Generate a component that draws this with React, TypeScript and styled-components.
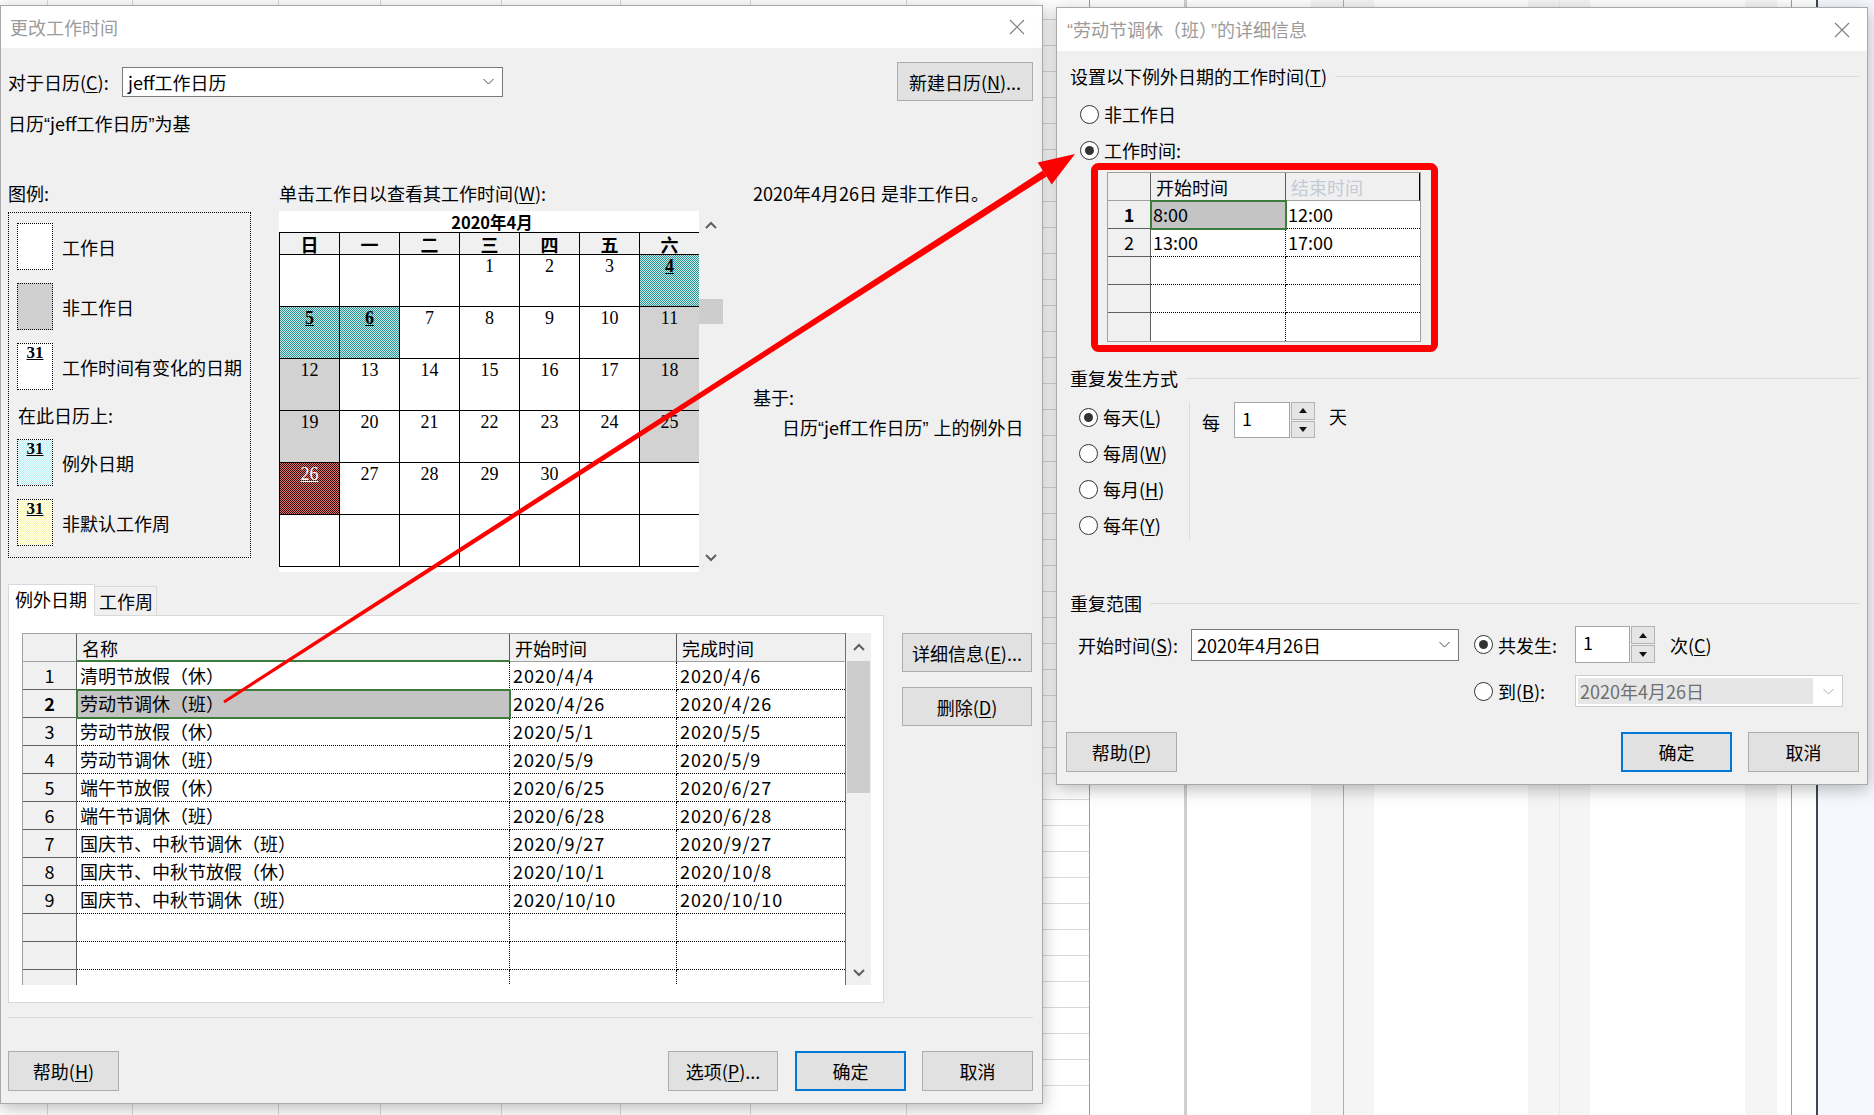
import React from "react";
import styled, { createGlobalStyle, css } from "styled-components";

const FONT = `"Noto Sans CJK SC", "Noto Sans", sans-serif`;
const SERIF = `"Liberation Serif", "DejaVu Serif", serif`;

const GlobalStyle = createGlobalStyle`
  html, body { margin: 0; padding: 0; background: #ffffff; }
  body { font-family: ${FONT}; font-size: 18px; color: #000; }
  *, *::before, *::after { box-sizing: border-box; }
`;

const checker = (a: string, b: string) => css`
  background-color: ${a};
  background-image: repeating-conic-gradient(${a} 0% 25%, ${b} 0% 50%);
  background-size: 2px 2px;
`;

/* ---------- page & backdrop ---------- */
const Page = styled.div`
  position: relative;
  width: 1874px;
  height: 1115px;
  overflow: hidden;
  background: #fff;
`;

const Backdrop = styled.div`
  display: flex;
  height: 100%;
`;

const SheetColumn = styled.div<{ $w: number; $edge?: boolean }>`
  flex: none;
  width: ${(p) => p.$w}px;
  height: 100%;
  border-right: 1px solid ${(p) => (p.$edge ? "#9c9c9c" : "#d8d8d8")};
  background-image: repeating-linear-gradient(
    to bottom,
    transparent 0px,
    transparent 25px,
    #d8d8d8 25px,
    #d8d8d8 26px
  );
  background-position: 0 -6px;
`;

const GanttColumn = styled.div<{ $w?: number; $shade?: boolean; $tint?: boolean; $line?: string; $lineW?: number }>`
  flex: ${(p) => (p.$w ? "none" : "1")};
  width: ${(p) => (p.$w ? `${p.$w}px` : "auto")};
  height: 100%;
  background: ${(p) => (p.$tint ? "#f6f8fd" : p.$shade ? "#f5f5f5" : "#ffffff")};
  border-right: ${(p) => (p.$line ? `${p.$lineW ?? 1}px solid ${p.$line}` : "none")};
`;

/* ---------- windows ---------- */
const Window = styled.section<{ $x: number; $y: number; $w: number; $h: number }>`
  position: absolute;
  left: ${(p) => p.$x}px;
  top: ${(p) => p.$y}px;
  width: ${(p) => p.$w}px;
  height: ${(p) => p.$h}px;
  display: flex;
  flex-direction: column;
  background: #f0f0f0;
  border: 1px solid #a9a9a9;
  box-shadow: 0 4px 16px rgba(0, 0, 0, 0.28);
  font-family: ${FONT};
  font-size: 18px;
  color: #000;
`;

const TitleBar = styled.header<{ $h: number; $pl: number }>`
  flex: none;
  height: ${(p) => p.$h}px;
  display: flex;
  align-items: center;
  justify-content: space-between;
  padding: 0 17px 0 ${(p) => p.$pl}px;
  background: #fff;
  color: #9b9b9b;
  line-height: 22px;
  white-space: nowrap;
`;

const CloseGlyph = () => (
  <svg width="16" height="16" viewBox="0 0 16 16">
    <path d="M1 1 L15 15 M15 1 L1 15" stroke="#7d7d7d" strokeWidth="1.1" fill="none" />
  </svg>
);

const Quote = styled.span<{ $gap?: number }>`
  font-family: "Liberation Sans", Arial, sans-serif;
  margin-left: ${(p) => p.$gap ?? 0}px;
`;

const MainBody = styled.div`
  flex: 1;
  display: flex;
  flex-direction: column;
  padding: 0 9px 0 7px;
`;

const DetailBody = styled.div`
  flex: 1;
  display: flex;
  flex-direction: column;
  padding: 0 8px 0 13px;
`;

const Row = styled.div<{ $mt?: number; $h?: number; $pl?: number }>`
  display: flex;
  align-items: center;
  margin-top: ${(p) => p.$mt ?? 0}px;
  padding-left: ${(p) => p.$pl ?? 0}px;
  ${(p) => (p.$h ? `height: ${p.$h}px;` : "")}
`;

const TextLine = styled.div<{ $mt?: number; $indent?: number }>`
  height: 22px;
  line-height: 22px;
  white-space: nowrap;
  margin-top: ${(p) => p.$mt ?? 0}px;
  padding-left: ${(p) => p.$indent ?? 0}px;
`;

const U = styled.span`
  text-decoration: underline;
  text-underline-offset: 2px;
`;

const Grow = styled.div`
  flex: 1;
`;

const FieldLabel = styled.span<{ $w: number; $pl?: number }>`
  flex: none;
  width: ${(p) => p.$w}px;
  padding-left: ${(p) => p.$pl ?? 0}px;
  line-height: 22px;
  white-space: nowrap;
`;

const SelectBox = styled.div<{ $w: number; $h: number; $disabled?: boolean }>`
  flex: none;
  width: ${(p) => p.$w}px;
  height: ${(p) => p.$h}px;
  display: flex;
  align-items: center;
  background: #fff;
  border: 1px solid ${(p) => (p.$disabled ? "#cdcdcd" : "#7a7a7a")};
  padding: 0 8px 0 ${(p) => (p.$disabled ? 2 : 5)}px;
`;

const SelectValue = styled.span<{ $disabled?: boolean }>`
  flex: 1;
  line-height: 22px;
  white-space: nowrap;
  ${(p) =>
    p.$disabled &&
    css`
      align-self: stretch;
      display: flex;
      align-items: center;
      margin: 2px 10px 2px 0;
      padding-left: 2px;
      background: #e6e6e6;
      color: #6f6f6f;
    `}
`;

const DropChevron = ({ light }: { light?: boolean }) => (
  <svg width="11" height="7" viewBox="0 0 11 7">
    <polyline points="0.5,1 5.5,6 10.5,1" fill="none" stroke={light ? "#a8a8a8" : "#4a4a4a"} strokeWidth="1" />
  </svg>
);

const PushButton = styled.div<{ $w: number; $h?: number; $primary?: boolean; $ml?: number }>`
  flex: none;
  width: ${(p) => p.$w}px;
  height: ${(p) => p.$h ?? 40}px;
  margin-left: ${(p) => p.$ml ?? 0}px;
  display: flex;
  align-items: center;
  justify-content: center;
  background: #e1e1e1;
  border: ${(p) => (p.$primary ? "2px solid #0078d7" : "1px solid #adadad")};
  line-height: 22px;
  white-space: nowrap;
`;

/* ---------- scrollbars ---------- */
const VScroll = styled.div<{ $w: number; $edge?: boolean }>`
  flex: none;
  width: ${(p) => p.$w}px;
  display: flex;
  flex-direction: column;
  background: #f0f0f0;
  border-left: ${(p) => (p.$edge ? "1px solid #6e6e6e" : "none")};
`;

const ScrollArrow = styled.div<{ $h: number }>`
  flex: none;
  height: ${(p) => p.$h}px;
  display: flex;
  align-items: center;
  justify-content: center;
`;

const ScrollTrack = styled.div`
  flex: 1;
  display: flex;
  flex-direction: column;
`;

const ScrollThumb = styled.div<{ $mt: number; $h: number; $inset?: number }>`
  margin: ${(p) => p.$mt}px ${(p) => p.$inset ?? 0}px 0;
  height: ${(p) => p.$h}px;
  background: #cdcdcd;
`;

const ArrowGlyph = ({ up }: { up?: boolean }) => (
  <svg width="12" height="8" viewBox="0 0 12 8">
    <polyline
      points={up ? "1,7 6,2 11,7" : "1,1 6,6 11,1"}
      fill="none"
      stroke="#5f5f5f"
      strokeWidth="2"
    />
  </svg>
);

/* ---------- legend ---------- */
const Columns = styled.div<{ $mt: number }>`
  display: flex;
  align-items: flex-start;
  margin-top: ${(p) => p.$mt}px;
`;

const LegendCol = styled.div`
  flex: none;
  width: 243px;
  display: flex;
  flex-direction: column;
`;

const LegendBox = styled.div`
  margin-top: 8px;
  height: 346px;
  border: 1px dotted #000;
  padding: 10px 0 0 8px;
  display: flex;
  flex-direction: column;
  gap: 13px;
`;

const LegendItem = styled.div`
  display: flex;
  align-items: center;
  gap: 9px;
  line-height: 22px;
  white-space: nowrap;
`;

type SwatchKind = "work" | "off" | "changed" | "exception" | "week";

const Swatch = styled.div<{ $kind: SwatchKind }>`
  flex: none;
  width: 36px;
  height: 47px;
  border: 1px dotted #000;
  text-align: center;
  font-family: ${SERIF};
  font-weight: 700;
  font-size: 17px;
  line-height: 18px;
  text-decoration: underline;
  ${(p) => p.$kind === "work" && css`background: #fff;`}
  ${(p) => p.$kind === "changed" && css`background: #fff;`}
  ${(p) => p.$kind === "off" && css`background: #d0d0d0;`}
  ${(p) => p.$kind === "exception" && checker("#b6eef3", "#f2ffff")}
  ${(p) => p.$kind === "week" && checker("#fbf6b0", "#fffff0")}
`;

const LegendSub = styled.div`
  line-height: 22px;
  margin-top: 1px;
  padding-left: 1px;
`;

/* ---------- calendar ---------- */
const CalendarCol = styled.div`
  flex: none;
  width: 444px;
  margin-left: 28px;
  display: flex;
  flex-direction: column;
`;

const CalendarFrame = styled.div`
  margin-top: 7px;
  height: 361px;
  display: flex;
`;

const MonthView = styled.div`
  flex: none;
  width: 420px;
  background: #fff;
  display: flex;
  flex-direction: column;
  overflow: hidden;
  padding-bottom: 5px;
`;

const MonthTitle = styled.div`
  height: 21px;
  line-height: 22px;
  text-align: center;
  font-weight: 700;
  font-size: 16.5px;
  padding-left: 6px;
`;

const DayGrid = styled.div`
  display: grid;
  grid-template-columns: repeat(7, 60px);
  grid-template-rows: 22px repeat(6, 52px);
  border-bottom: 1px solid #000;
`;

const DayHead = styled.div`
  border-top: 1px solid #000;
  border-left: 1px solid #000;
  background: #f0f0f0;
  text-align: center;
  font-weight: 700;
  font-size: 18px;
  line-height: 22px;
`;

type Tone = "work" | "off" | "teal" | "red";

const DayCell = styled.div<{ $tone: Tone; $mark?: boolean }>`
  border-top: 1px solid #000;
  border-left: 1px solid #000;
  font-family: ${SERIF};
  font-size: 18px;
  line-height: 20px;
  padding-top: 1px;
  text-align: center;
  color: ${(p) => (p.$tone === "red" ? "#fff" : "#000")};
  font-weight: ${(p) => (p.$mark ? 700 : 400)};
  text-decoration: ${(p) => (p.$mark || p.$tone === "red" ? "underline" : "none")};
  background: #fff;
  ${(p) => p.$tone === "off" && css`background: #d2d2d2;`}
  ${(p) => p.$tone === "teal" && checker("#2f9696", "#c6e6e6")}
  ${(p) => p.$tone === "red" && checker("#2e0b0b", "#e87070")}
`;

const InfoCol = styled.div`
  flex: 1;
  margin-left: 30px;
  display: flex;
  flex-direction: column;
`;

/* ---------- tabs & tables ---------- */
const LowerRow = styled.div<{ $mt: number }>`
  display: flex;
  margin-top: ${(p) => p.$mt}px;
`;

const TabArea = styled.div`
  flex: none;
  width: 876px;
  display: flex;
  flex-direction: column;
`;

const TabStrip = styled.div`
  display: flex;
  align-items: flex-end;
  height: 31px;
`;

const Tab = styled.div<{ $active?: boolean; $w: number }>`
  flex: none;
  width: ${(p) => p.$w}px;
  height: ${(p) => (p.$active ? 32 : 29)}px;
  margin-bottom: ${(p) => (p.$active ? -1 : 0)}px;
  position: relative;
  z-index: ${(p) => (p.$active ? 1 : 0)};
  padding-left: ${(p) => (p.$active ? 6 : 4)}px;
  line-height: 29px;
  background: ${(p) => (p.$active ? "#fff" : "#f0f0f0")};
  border: 1px solid #d9d9d9;
  border-bottom: none;
  ${(p) => !p.$active && css`border-left: none;`}
  white-space: nowrap;
`;

const TabPanel = styled.div`
  height: 388px;
  background: #fff;
  border: 1px solid #d9d9d9;
  padding: 17px 0 0 13px;
`;

const TableFrame = styled.div<{ $h: number }>`
  display: flex;
  height: ${(p) => p.$h}px;
`;

const GridTable = styled.div<{ $cols: string; $w: number; $boxed?: boolean }>`
  flex: none;
  width: ${(p) => p.$w}px;
  display: grid;
  grid-template-columns: ${(p) => p.$cols};
  grid-auto-rows: 28px;
  align-content: start;
  overflow: hidden;
  background: #fff;
  border-top: 1px solid #a0a0a0;
  border-left: 1px solid #a0a0a0;
  ${(p) =>
    p.$boxed &&
    css`
      border-right: 1px solid #a0a0a0;
      border-bottom: 1px solid #a0a0a0;
    `}
`;

const HeadCell = styled.div<{ $focus?: boolean; $dim?: boolean; $edge?: string; $pl?: number }>`
  background: #f0f0f0;
  border-bottom: ${(p) => (p.$focus ? "2px solid #3c7d3c" : "1px solid #a0a0a0")};
  border-right: 1px solid ${(p) => p.$edge ?? "#5a5a5a"};
  padding: 2px 0 0 ${(p) => p.$pl ?? 5}px;
  line-height: 25px;
  color: ${(p) => (p.$dim ? "#c3cbd6" : "#000")};
  white-space: nowrap;
  overflow: hidden;
`;

const RowHead = styled.div<{ $bold?: boolean; $lastRow?: boolean }>`
  background: #f0f0f0;
  border-bottom: ${(p) => (p.$lastRow ? "none" : "1px solid #5f5f5f")};
  border-right: 1px solid #5f5f5f;
  text-align: center;
  line-height: 27px;
  font-weight: ${(p) => (p.$bold ? 700 : 400)};
`;

const DataCell = styled.div<{ $selected?: boolean; $last?: boolean; $lastRow?: boolean; $pl?: number; $wide?: boolean }>`
  border-bottom: ${(p) => (p.$lastRow ? "none" : "1px dotted #000")};
  border-right: ${(p) => (p.$last ? "none" : "1px dotted #000")};
  padding-left: ${(p) => p.$pl ?? 3}px;
  line-height: 27px;
  letter-spacing: ${(p) => (p.$wide ? "0.9px" : "normal")};
  white-space: nowrap;
  overflow: hidden;
  ${(p) =>
    p.$selected &&
    css`
      background: #c4c4c4;
      outline: 2px solid #3c7d3c;
      outline-offset: -1px;
      position: relative;
      z-index: 1;
    `}
`;

const SideButtons = styled.div`
  margin-left: 18px;
  padding-top: 49px;
  display: flex;
  flex-direction: column;
  gap: 15px;
`;

const Separator = styled.div<{ $mt: number }>`
  margin-top: ${(p) => p.$mt}px;
  height: 1px;
  background: #dadada;
`;

const ButtonRow = styled.div<{ $mt: number; $gap?: number }>`
  display: flex;
  align-items: center;
  margin-top: ${(p) => p.$mt}px;
  gap: ${(p) => p.$gap ?? 16}px;
`;

/* ---------- detail dialog parts ---------- */
const GroupHeader = styled.div<{ $mt: number }>`
  display: flex;
  align-items: center;
  height: 22px;
  line-height: 22px;
  margin-top: ${(p) => p.$mt}px;
  white-space: nowrap;
  &::after {
    content: "";
    flex: 1;
    height: 1px;
    margin-left: 8px;
    background: #dcdcdc;
  }
`;

const RadioRow = styled.div<{ $mt?: number; $indent?: number }>`
  display: flex;
  align-items: center;
  height: 22px;
  margin-top: ${(p) => p.$mt ?? 0}px;
  padding-left: ${(p) => p.$indent ?? 0}px;
  white-space: nowrap;
`;

const RadioCircle = styled.span`
  flex: none;
  width: 19px;
  height: 19px;
  border-radius: 50%;
  border: 1px solid #333;
  background: #fff;
  margin-right: 5px;
  display: flex;
  align-items: center;
  justify-content: center;
`;

const RadioDot = styled.span`
  width: 9px;
  height: 9px;
  border-radius: 50%;
  background: #333;
`;

const Radio = ({ on }: { on?: boolean }) => <RadioCircle>{on && <RadioDot />}</RadioCircle>;

const GridWrap = styled.div<{ $mt: number; $indent: number }>`
  margin-top: ${(p) => p.$mt}px;
  padding-left: ${(p) => p.$indent}px;
`;

const RecurBlock = styled.div<{ $mt: number }>`
  display: flex;
  height: 138px;
  margin-top: ${(p) => p.$mt}px;
`;

const RecurOptions = styled.div`
  flex: none;
  width: 120px;
  border-right: 1px solid #dcdcdc;
  padding-top: 4px;
  display: flex;
  flex-direction: column;
  gap: 14px;
`;

const EveryGroup = styled.div`
  display: flex;
  align-items: flex-start;
  margin-left: 12px;
`;

const Word = styled.span<{ $mt?: number; $ml?: number; $w?: number }>`
  flex: none;
  line-height: 22px;
  margin-top: ${(p) => p.$mt ?? 0}px;
  margin-left: ${(p) => p.$ml ?? 0}px;
  ${(p) => (p.$w ? `width: ${p.$w}px;` : "")}
  white-space: nowrap;
`;

const Spin = styled.div<{ $h: number; $ml?: number }>`
  flex: none;
  display: flex;
  height: ${(p) => p.$h}px;
  margin-left: ${(p) => p.$ml ?? 0}px;
`;

const SpinField = styled.div<{ $w: number }>`
  width: ${(p) => p.$w}px;
  border: 1px solid #a6a6a6;
  background: #fff;
  padding: 4px 0 0 7px;
  line-height: 22px;
`;

const SpinButtons = styled.div`
  width: 24px;
  display: flex;
  flex-direction: column;
  gap: 1px;
  margin-left: 1px;
`;

const SpinBtn = styled.div`
  flex: 1;
  background: #e5e5e5;
  border: 1px solid #b4b4b4;
  display: flex;
  align-items: center;
  justify-content: center;
`;

const Tri = ({ up }: { up?: boolean }) => (
  <svg width="8" height="5" viewBox="0 0 8 5">
    <polygon points={up ? "0,5 4,0 8,5" : "0,0 8,0 4,5"} fill="#111" />
  </svg>
);

const Overlay = styled.svg`
  position: absolute;
  left: 0;
  top: 0;
  pointer-events: none;
  z-index: 10;
`;

/* ---------- data ---------- */
const weekHeads = ["日", "一", "二", "三", "四", "五", "六"];

type Day = { n?: number; tone: Tone; mark?: boolean };
const days: Day[] = [
  { tone: "work" }, { tone: "work" }, { tone: "work" },
  { n: 1, tone: "work" }, { n: 2, tone: "work" }, { n: 3, tone: "work" }, { n: 4, tone: "teal", mark: true },
  { n: 5, tone: "teal", mark: true }, { n: 6, tone: "teal", mark: true }, { n: 7, tone: "work" }, { n: 8, tone: "work" },
  { n: 9, tone: "work" }, { n: 10, tone: "work" }, { n: 11, tone: "off" },
  { n: 12, tone: "off" }, { n: 13, tone: "work" }, { n: 14, tone: "work" }, { n: 15, tone: "work" },
  { n: 16, tone: "work" }, { n: 17, tone: "work" }, { n: 18, tone: "off" },
  { n: 19, tone: "off" }, { n: 20, tone: "work" }, { n: 21, tone: "work" }, { n: 22, tone: "work" },
  { n: 23, tone: "work" }, { n: 24, tone: "work" }, { n: 25, tone: "off" },
  { n: 26, tone: "red" }, { n: 27, tone: "work" }, { n: 28, tone: "work" }, { n: 29, tone: "work" },
  { n: 30, tone: "work" }, { tone: "work" }, { tone: "work" },
  { tone: "work" }, { tone: "work" }, { tone: "work" }, { tone: "work" }, { tone: "work" }, { tone: "work" }, { tone: "work" },
];

const exceptions: [string, string, string][] = [
  ["清明节放假（休）", "2020/4/4", "2020/4/6"],
  ["劳动节调休（班）", "2020/4/26", "2020/4/26"],
  ["劳动节放假（休）", "2020/5/1", "2020/5/5"],
  ["劳动节调休（班）", "2020/5/9", "2020/5/9"],
  ["端午节放假（休）", "2020/6/25", "2020/6/27"],
  ["端午节调休（班）", "2020/6/28", "2020/6/28"],
  ["国庆节、中秋节调休（班）", "2020/9/27", "2020/9/27"],
  ["国庆节、中秋节放假（休）", "2020/10/1", "2020/10/8"],
  ["国庆节、中秋节调休（班）", "2020/10/10", "2020/10/10"],
  ["", "", ""],
  ["", "", ""],
  ["", "", ""],
];

const hours: [string, string][] = [
  ["8:00", "12:00"],
  ["13:00", "17:00"],
  ["", ""],
  ["", ""],
  ["", ""],
];

const sheetWidths = [48, 85, 146, 102, 121, 119, 130, 156, 183];

/* ---------- component ---------- */
export default function App() {
  return (
    <Page>
      <GlobalStyle />
      <Backdrop>
        {sheetWidths.map((w, i) => (
          <SheetColumn key={i} $w={w} $edge={i === sheetWidths.length - 1} />
        ))}
        <GanttColumn $w={97} $line="#cfcfcf" $lineW={3} />
        <GanttColumn $w={124} />
        <GanttColumn $w={33} $shade $line="#8cc68c" />
        <GanttColumn $w={30} $shade />
        <GanttColumn $w={154} />
        <GanttColumn $w={32} $shade $line="#ebebeb" />
        <GanttColumn $w={30} $shade />
        <GanttColumn $w={155} />
        <GanttColumn $w={32} $shade />
        <GanttColumn $w={15} $line="#a0a0a0" />
        <GanttColumn $w={26} $line="#3b4756" $lineW={2} />
        <GanttColumn $tint />
      </Backdrop>

      {/* ---------- 更改工作时间 ---------- */}
      <Window $x={0} $y={5} $w={1043} $h={1099}>
        <TitleBar $h={42} $pl={9}>
          <span>更改工作时间</span>
          <CloseGlyph />
        </TitleBar>
        <MainBody>
          <Row $mt={14} $h={39}>
            <FieldLabel $w={114}>
              对于日历(<U>C</U>):
            </FieldLabel>
            <SelectBox $w={381} $h={30}>
              <SelectValue>jeff工作日历</SelectValue>
              <DropChevron />
            </SelectBox>
            <Grow />
            <PushButton $w={136} $h={39}>
              新建日历(<U>N</U>)...
            </PushButton>
          </Row>
          <TextLine $mt={11}>
            日历<Quote>“</Quote>jeff工作日历<Quote>”</Quote>为基
          </TextLine>

          <Columns $mt={48}>
            <LegendCol>
              <TextLine>图例:</TextLine>
              <LegendBox>
                <LegendItem>
                  <Swatch $kind="work" />
                  工作日
                </LegendItem>
                <LegendItem>
                  <Swatch $kind="off" />
                  非工作日
                </LegendItem>
                <LegendItem>
                  <Swatch $kind="changed">31</Swatch>
                  工作时间有变化的日期
                </LegendItem>
                <LegendSub>在此日历上:</LegendSub>
                <LegendItem>
                  <Swatch $kind="exception">31</Swatch>
                  例外日期
                </LegendItem>
                <LegendItem>
                  <Swatch $kind="week">31</Swatch>
                  非默认工作周
                </LegendItem>
              </LegendBox>
            </LegendCol>

            <CalendarCol>
              <TextLine>
                单击工作日以查看其工作时间(<U>W</U>):
              </TextLine>
              <CalendarFrame>
                <MonthView>
                  <MonthTitle>2020年4月</MonthTitle>
                  <DayGrid>
                    {weekHeads.map((d) => (
                      <DayHead key={d}>{d}</DayHead>
                    ))}
                    {days.map((d, i) => (
                      <DayCell key={i} $tone={d.tone} $mark={d.mark}>
                        {d.n ?? ""}
                      </DayCell>
                    ))}
                  </DayGrid>
                </MonthView>
                <VScroll $w={24}>
                  <ScrollArrow $h={28}>
                    <ArrowGlyph up />
                  </ScrollArrow>
                  <ScrollTrack>
                    <ScrollThumb $mt={60} $h={25} />
                  </ScrollTrack>
                  <ScrollArrow $h={28}>
                    <ArrowGlyph />
                  </ScrollArrow>
                </VScroll>
              </CalendarFrame>
            </CalendarCol>

            <InfoCol>
              <TextLine>2020年4月26日 是非工作日。</TextLine>
              <TextLine $mt={182}>基于:</TextLine>
              <TextLine $mt={8} $indent={29}>
                日历<Quote>“</Quote>jeff工作日历<Quote>” </Quote>上的例外日
              </TextLine>
            </InfoCol>
          </Columns>

          <LowerRow $mt={12}>
            <TabArea>
              <TabStrip>
                <Tab $active $w={87}>
                  例外日期
                </Tab>
                <Tab $w={62}>工作周</Tab>
              </TabStrip>
              <TabPanel>
                <TableFrame $h={352}>
                  <GridTable $cols="54px 433px 167px 168px" $w={823}>
                    <HeadCell $edge="#5f5f5f" />
                    <HeadCell $focus>名称</HeadCell>
                    <HeadCell>开始时间</HeadCell>
                    <HeadCell $edge="transparent">完成时间</HeadCell>
                    {exceptions.map((r, i) => (
                      <React.Fragment key={i}>
                        <RowHead $bold={i === 1}>{r[0] ? i + 1 : ""}</RowHead>
                        <DataCell $selected={i === 1}>{r[0]}</DataCell>
                        <DataCell $wide>{r[1]}</DataCell>
                        <DataCell $wide $last>
                          {r[2]}
                        </DataCell>
                      </React.Fragment>
                    ))}
                  </GridTable>
                  <VScroll $w={26} $edge>
                    <ScrollArrow $h={28}>
                      <ArrowGlyph up />
                    </ScrollArrow>
                    <ScrollTrack>
                      <ScrollThumb $mt={0} $h={132} $inset={1} />
                    </ScrollTrack>
                    <ScrollArrow $h={24}>
                      <ArrowGlyph />
                    </ScrollArrow>
                  </VScroll>
                </TableFrame>
              </TabPanel>
            </TabArea>
            <SideButtons>
              <PushButton $w={130} $h={39}>
                详细信息(<U>E</U>)...
              </PushButton>
              <PushButton $w={130} $h={39}>
                删除(<U>D</U>)
              </PushButton>
            </SideButtons>
          </LowerRow>

          <Separator $mt={14} />

          <ButtonRow $mt={33}>
            <PushButton $w={111}>
              帮助(<U>H</U>)
            </PushButton>
            <Grow />
            <PushButton $w={110}>
              选项(<U>P</U>)...
            </PushButton>
            <PushButton $w={111} $primary $ml={1}>
              确定
            </PushButton>
            <PushButton $w={111}>取消</PushButton>
          </ButtonRow>
        </MainBody>
      </Window>

      {/* ---------- 详细信息 ---------- */}
      <Window $x={1056} $y={7} $w={812} $h={778}>
        <TitleBar $h={43} $pl={10}>
          <span>
            <Quote>“</Quote>劳动节调休（班）<Quote $gap={3}>”</Quote>的详细信息
          </span>
          <CloseGlyph />
        </TitleBar>
        <DetailBody>
          <GroupHeader $mt={14}>
            设置以下例外日期的工作时间(<U>T</U>)
          </GroupHeader>
          <RadioRow $mt={16} $indent={10}>
            <Radio />
            非工作日
          </RadioRow>
          <RadioRow $mt={14} $indent={10}>
            <Radio on />
            工作时间:
          </RadioRow>
          <GridWrap $mt={11} $indent={37}>
            <GridTable $cols="43px 135px 134px" $w={314} $boxed>
              <HeadCell $edge="#5f5f5f" />
              <HeadCell>开始时间</HeadCell>
              <HeadCell $dim $edge="#000">
                结束时间
              </HeadCell>
              {hours.map((h, i) => (
                <React.Fragment key={i}>
                  <RowHead $bold={i === 0} $lastRow={i === hours.length - 1}>
                    {h[0] ? i + 1 : ""}
                  </RowHead>
                  <DataCell $selected={i === 0} $pl={2} $lastRow={i === hours.length - 1}>
                    {h[0]}
                  </DataCell>
                  <DataCell $last $pl={2} $lastRow={i === hours.length - 1}>
                    {h[1]}
                  </DataCell>
                </React.Fragment>
              ))}
            </GridTable>
          </GridWrap>

          <GroupHeader $mt={25}>重复发生方式</GroupHeader>
          <RecurBlock $mt={13}>
            <RecurOptions>
              <RadioRow $indent={9}>
                <Radio on />
                每天(<U>L</U>)
              </RadioRow>
              <RadioRow $indent={9}>
                <Radio />
                每周(<U>W</U>)
              </RadioRow>
              <RadioRow $indent={9}>
                <Radio />
                每月(<U>H</U>)
              </RadioRow>
              <RadioRow $indent={9}>
                <Radio />
                每年(<U>Y</U>)
              </RadioRow>
            </RecurOptions>
            <EveryGroup>
              <Word $mt={9}>每</Word>
              <Spin $h={36} $ml={14}>
                <SpinField $w={56}>1</SpinField>
                <SpinButtons>
                  <SpinBtn>
                    <Tri up />
                  </SpinBtn>
                  <SpinBtn>
                    <Tri />
                  </SpinBtn>
                </SpinButtons>
              </Spin>
              <Word $mt={3} $ml={14}>
                天
              </Word>
            </EveryGroup>
          </RecurBlock>

          <GroupHeader $mt={52}>重复范围</GroupHeader>
          <Row $mt={12} $h={37}>
            <FieldLabel $w={121} $pl={8}>
              开始时间(<U>S</U>):
            </FieldLabel>
            <SelectBox $w={268} $h={32}>
              <SelectValue>2020年4月26日</SelectValue>
              <DropChevron />
            </SelectBox>
            <RadioRow $indent={15}>
              <Radio on />
              <Word $w={77}>共发生:</Word>
            </RadioRow>
            <Spin $h={37}>
              <SpinField $w={55}>1</SpinField>
              <SpinButtons>
                <SpinBtn>
                  <Tri up />
                </SpinBtn>
                <SpinBtn>
                  <Tri />
                </SpinBtn>
              </SpinButtons>
            </Spin>
            <Word $ml={15}>
              次(<U>C</U>)
            </Word>
          </Row>
          <Row $mt={12} $h={32} $pl={389}>
            <RadioRow $indent={15}>
              <Radio />
              <Word $w={77}>
                到(<U>B</U>):
              </Word>
            </RadioRow>
            <SelectBox $w={268} $h={32} $disabled>
              <SelectValue $disabled>2020年4月26日</SelectValue>
              <DropChevron light />
            </SelectBox>
          </Row>

          <ButtonRow $mt={25}>
            <PushButton $w={111} $ml={-4}>
              帮助(<U>P</U>)
            </PushButton>
            <Grow />
            <PushButton $w={111} $primary>
              确定
            </PushButton>
            <PushButton $w={111}>取消</PushButton>
          </ButtonRow>
        </DetailBody>
      </Window>

      <Overlay width={1874} height={1115} viewBox="0 0 1874 1115">
        <rect x="1094.5" y="166.5" width="340" height="182" rx="4" fill="none" stroke="#ff0000" strokeWidth="7" />
        <polygon points="224.8,703.3 223.2,700.7 1042.8,170.6 1046.6,176.4" fill="#ff0000" />
        <polygon points="1075,154 1037.7,162.6 1051.7,184.4" fill="#ff0000" />
      </Overlay>
    </Page>
  );
}
